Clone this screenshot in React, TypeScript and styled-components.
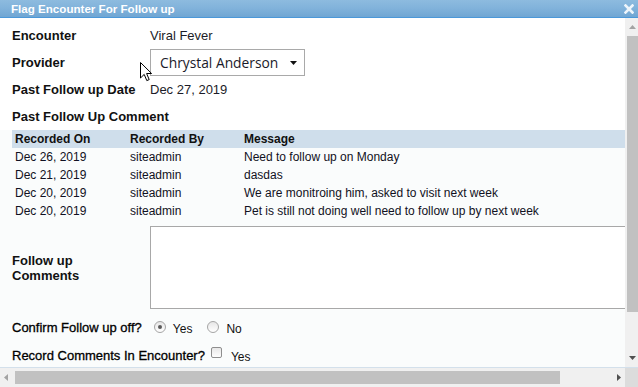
import React from 'react'
import styled, { createGlobalStyle } from 'styled-components'

const GlobalStyle = createGlobalStyle`
  html, body {
    margin: 0;
    padding: 0;
    background: #ffffff;
  }
  body {
    font-family: "Liberation Sans", Arial, sans-serif;
    color: #111;
  }
`

interface FollowUpRow {
  recordedOn: string
  recordedBy: string
  message: string
}

const rows: FollowUpRow[] = [
  { recordedOn: 'Dec 26, 2019', recordedBy: 'siteadmin', message: 'Need to follow up on Monday' },
  { recordedOn: 'Dec 21, 2019', recordedBy: 'siteadmin', message: 'dasdas' },
  { recordedOn: 'Dec 20, 2019', recordedBy: 'siteadmin', message: 'We are monitroing him, asked to visit next week' },
  { recordedOn: 'Dec 20, 2019', recordedBy: 'siteadmin', message: 'Pet is still not doing well need to follow up by next week' },
]

const Arrow = ({ dir, color }: { dir: 'up' | 'down' | 'left' | 'right'; color: string }) => {
  const points = {
    up: '0,4 3.5,0 7,4',
    down: '0,0 7,0 3.5,4',
    left: '4,0 4,7 0,3.5',
    right: '0,0 0,7 4,3.5',
  }[dir]
  const vertical = dir === 'up' || dir === 'down'
  return (
    <svg width={vertical ? 7 : 4} height={vertical ? 4 : 7} viewBox={vertical ? '0 0 7 4' : '0 0 4 7'}>
      <polygon points={points} fill={color} />
    </svg>
  )
}

export default function App() {
  return (
    <Dialog>
      <GlobalStyle />
      <TitleBar>
        <Title>Flag Encounter For Follow up</Title>
        <CloseButton>
          <svg width="10" height="10" viewBox="0 0 10 10">
            <path d="M1.5 1.5 L8.5 8.5 M8.5 1.5 L1.5 8.5" stroke="#eef5fb" strokeWidth="2.6" strokeLinecap="square" />
          </svg>
        </CloseButton>
      </TitleBar>

      <Main>
        <Content>
          <TopSection>
            <FieldRow>
              <Label>Encounter</Label>
              <Value>Viral Fever</Value>
            </FieldRow>
            <FieldRow spaced={5} tall>
              <Label>Provider</Label>
              <SelectBox>
                <SelectText>Chrystal Anderson</SelectText>
                <Arrow dir="down" color="#111" />
              </SelectBox>
              <Cursor width="13" height="20" viewBox="0 0 13 20">
                <path
                  d="M0.5 0.5 L0.5 16 L4.2 12.4 L6.8 18.6 L9.2 17.6 L6.6 11.5 L11.6 11.5 Z"
                  fill="#fff"
                  stroke="#000"
                  strokeWidth="1"
                  strokeLinejoin="miter"
                />
              </Cursor>
            </FieldRow>
            <FieldRow spaced={4}>
              <Label>Past Follow up Date</Label>
              <Value>Dec 27, 2019</Value>
            </FieldRow>
            <FieldRow spaced={9}>
              <Label>Past Follow Up Comment</Label>
            </FieldRow>
          </TopSection>

          <HistoryTable>
            <thead>
              <tr>
                <HeadCell w={112}>Recorded On</HeadCell>
                <HeadCell w={111}>Recorded By</HeadCell>
                <HeadCell>Message</HeadCell>
              </tr>
            </thead>
            <tbody>
              {rows.map((r, i) => (
                <tr key={i}>
                  <Cell>{r.recordedOn}</Cell>
                  <Cell>{r.recordedBy}</Cell>
                  <Cell>{r.message}</Cell>
                </tr>
              ))}
            </tbody>
          </HistoryTable>

          <CommentRow>
            <CommentLabel>
              Follow up
              <br />
              Comments
            </CommentLabel>
            <CommentBox />
          </CommentRow>

          <OptionRow spaced={9}>
            <PlainLabel>Confirm Follow up off?</PlainLabel>
            <Radio checked gap={12} />
            <OptionText>Yes</OptionText>
            <Radio gap={15} />
            <OptionText>No</OptionText>
          </OptionRow>

          <OptionRow spaced={10}>
            <PlainLabel>Record Comments In Encounter?</PlainLabel>
            <Checkbox />
            <OptionText>Yes</OptionText>
          </OptionRow>
        </Content>

        <VScrollbar>
          <ScrollArrow>
            <Arrow dir="up" color="#a3a3a3" />
          </ScrollArrow>
          <VTrack>
            <VThumb />
          </VTrack>
          <ScrollArrow>
            <Arrow dir="down" color="#505050" />
          </ScrollArrow>
        </VScrollbar>
      </Main>

      <HScrollbar>
        <HTrackArea>
          <HArrow>
            <Arrow dir="left" color="#a3a3a3" />
          </HArrow>
          <HTrack>
            <HThumb />
          </HTrack>
          <HArrow>
            <Arrow dir="right" color="#505050" />
          </HArrow>
        </HTrackArea>
        <Corner />
      </HScrollbar>
    </Dialog>
  )
}

const Dialog = styled.div`
  width: 638px;
  height: 387px;
  display: flex;
  flex-direction: column;
  overflow: hidden;
  background: #fafcfc;
`

const TitleBar = styled.div`
  height: 17px;
  flex: none;
  display: flex;
  align-items: center;
  justify-content: space-between;
  padding: 0 4px 0 11px;
  background: linear-gradient(180deg, #8dbbdf 0%, #82b3db 45%, #70a6d3 100%);
  border-bottom: 1px solid #4b98d9;
`

const Title = styled.span`
  font-family: "Liberation Sans", Arial, sans-serif;
  font-weight: bold;
  font-size: 11.6px;
  color: #ffffff;
`

const CloseButton = styled.span`
  display: flex;
  width: 10px;
  height: 10px;
`

const Main = styled.div`
  flex: 1;
  display: flex;
  min-height: 0;
`

const Content = styled.div`
  flex: 1;
  min-width: 0;
  overflow: hidden;
  display: flex;
  flex-direction: column;
  padding-left: 12px;
  background: #fafcfc;
`

const TopSection = styled.div`
  display: flex;
  flex-direction: column;
  background: #ffffff;
  margin-left: -12px;
  padding: 8px 0 5px 12px;
`

const FieldRow = styled.div<{ spaced?: number; tall?: boolean }>`
  position: relative;
  display: flex;
  align-items: center;
  height: ${(p) => (p.tall ? 27 : 18)}px;
  margin-top: ${(p) => p.spaced ?? 0}px;
`

const Label = styled.span`
  width: 138px;
  flex: none;
  font-weight: bold;
  font-size: 13px;
  color: #111;
  white-space: nowrap;
`

const Value = styled.span`
  font-size: 13px;
  color: #1c1c28;
`

const SelectBox = styled.div`
  width: 155px;
  height: 27px;
  box-sizing: border-box;
  border: 1px solid #a9a9a9;
  background: #ffffff;
  display: flex;
  align-items: center;
  justify-content: space-between;
  padding: 0 7px 0 9px;
`

const SelectText = styled.span`
  font-family: "Open Sans", "Liberation Sans", sans-serif;
  font-size: 13.8px;
  color: #1a1a2a;
`

const Cursor = styled.svg`
  position: absolute;
  left: 128px;
  top: 13px;
`

const HistoryTable = styled.table`
  border-collapse: collapse;
  width: 613px;
  flex: none;
  table-layout: fixed;
  font-size: 12px;
`

const HeadCell = styled.th<{ w?: number }>`
  ${(p) => (p.w ? `width: ${p.w}px;` : '')}
  height: 18px;
  padding: 0 0 0 3px;
  text-align: left;
  font-weight: bold;
  color: #111;
  background: #cfdeeb;
`

const Cell = styled.td`
  height: 18px;
  padding: 0 0 0 3px;
  color: #111122;
  white-space: nowrap;
`

const CommentRow = styled.div`
  display: flex;
  align-items: center;
  margin-top: 6px;
  flex: none;
`

const CommentLabel = styled.span`
  width: 138px;
  flex: none;
  font-weight: bold;
  font-size: 13px;
  line-height: 15px;
  color: #111;
`

const CommentBox = styled.div`
  width: 520px;
  height: 83px;
  flex: none;
  box-sizing: border-box;
  border: 1px solid #a8a8a8;
  background: #ffffff;
`

const OptionRow = styled.div<{ spaced: number }>`
  display: flex;
  align-items: center;
  height: 18px;
  flex: none;
  margin-top: ${(p) => p.spaced}px;
`

const PlainLabel = styled.span`
  font-size: 13px;
  color: #000;
  white-space: nowrap;
  -webkit-text-stroke: 0.3px #000;
`

const Radio = styled.span<{ checked?: boolean; gap: number }>`
  position: relative;
  width: 12px;
  height: 12px;
  box-sizing: border-box;
  border-radius: 50%;
  border: 1px solid #a5a5a5;
  background: linear-gradient(180deg, #e6e6e6, #ffffff);
  margin-left: ${(p) => p.gap}px;
  margin-right: 7px;
  &::after {
    content: '';
    display: ${(p) => (p.checked ? 'block' : 'none')};
    position: absolute;
    left: 3px;
    top: 3px;
    width: 4px;
    height: 4px;
    border-radius: 50%;
    background: #5a5a5a;
  }
`

const Checkbox = styled.span`
  width: 11px;
  height: 11px;
  box-sizing: border-box;
  border: 1px solid #8e8e8e;
  border-radius: 2px;
  background: linear-gradient(180deg, #e8e8e8, #fdfdfd);
  margin: 0 9px 5px 6px;
`

const OptionText = styled.span`
  font-size: 12px;
  color: #111;
  padding-top: 4px;
`

const VScrollbar = styled.div`
  width: 13px;
  flex: none;
  display: flex;
  flex-direction: column;
  background: #f0f0f0;
`

const ScrollArrow = styled.div`
  height: 18px;
  display: flex;
  align-items: center;
  justify-content: center;
  padding-left: 1px;
`

const VTrack = styled.div`
  flex: 1;
  padding-left: 2px;
`

const VThumb = styled.div`
  height: 276px;
  background: #c1c1c1;
`

const HScrollbar = styled.div`
  height: 19px;
  flex: none;
  display: flex;
  border-top: 1px solid #d3e0eb;
`

const HTrackArea = styled.div`
  flex: 1;
  display: flex;
  align-items: center;
  background: #f0f0f0;
`

const HArrow = styled.div`
  width: 12px;
  display: flex;
  justify-content: center;
`

const HTrack = styled.div`
  flex: 1;
  padding: 0 4px 0 3px;
`

const HThumb = styled.div`
  width: 545px;
  height: 13px;
  background: #c1c1c1;
`

const Corner = styled.div`
  width: 13px;
  background: #dcdcdc;
`
